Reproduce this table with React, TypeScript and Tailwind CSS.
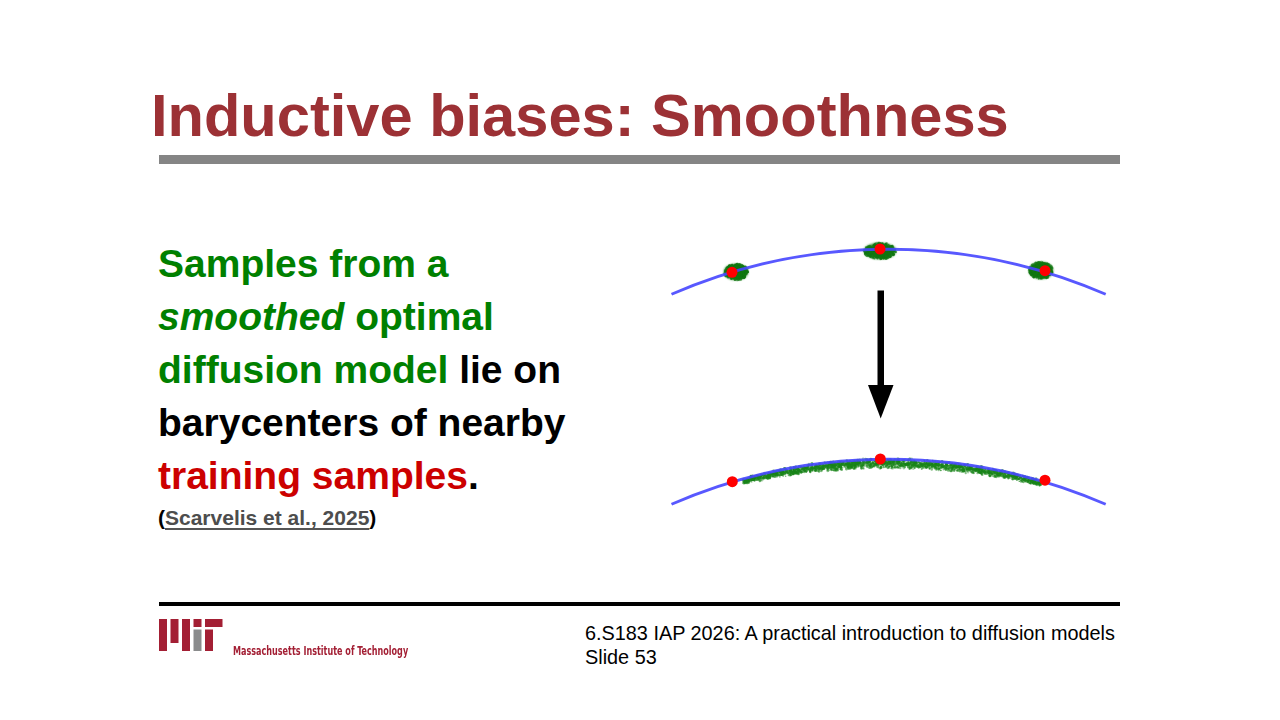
import React from "react";

function mulberry32(a: number) {
  return function () {
    a |= 0;
    a = (a + 0x6d2b79f5) | 0;
    let t = Math.imul(a ^ (a >>> 15), 1 | a);
    t = (t + Math.imul(t ^ (t >>> 7), 61 | t)) ^ t;
    return ((t ^ (t >>> 14)) >>> 0) / 4294967296;
  };
}

const CX = 888.5;
const R = 545.7;
const CY_BOT = 1004.7;

function arcY(cy: number, x: number) {
  return cy - Math.sqrt(R * R - (x - CX) * (x - CX));
}

const band: { x: number; y: number; r: number; o: number }[] = (() => {
  const rnd = mulberry32(12345);
  const pts: { x: number; y: number; r: number; o: number }[] = [];
  for (let i = 0; i < 2600; i++) {
    const x = 743 + rnd() * 298;
    const u = (x - 743) / 298;
    const thick = 7 + 4 * Math.sin(Math.PI * u);
    const base = arcY(CY_BOT, x);
    const g = (rnd() + rnd()) / 2;
    const y = base - 1 + g * thick;
    pts.push({ x, y, r: 0.7 + rnd() * 0.8, o: 0.3 + rnd() * 0.45 });
  }
  return pts;
})();

const blobs: { x: number; y: number; r: number; o: number }[] = (() => {
  const rnd = mulberry32(777);
  const centers = [
    { x: 736, y: 272, rx: 12, ry: 8 },
    { x: 880, y: 251, rx: 16, ry: 8 },
    { x: 1041, y: 270.5, rx: 12, ry: 8.5 },
  ];
  const pts: { x: number; y: number; r: number; o: number }[] = [];
  centers.forEach((c) => {
    for (let i = 0; i < 350; i++) {
      const a = rnd() * Math.PI * 2;
      const rr = Math.sqrt(rnd());
      pts.push({
        x: c.x + Math.cos(a) * rr * c.rx,
        y: c.y + Math.sin(a) * rr * c.ry,
        r: 0.8 + rnd() * 0.8,
        o: 0.4 + rnd() * 0.4,
      });
    }
  });
  return pts;
})();

function Figure() {
  return (
    <svg
      width="440"
      height="270"
      viewBox="668 238 440 270"
      className="mt-[1px] shrink-0"
    >
      <defs>
        <filter id="soft" x="-50%" y="-50%" width="200%" height="200%">
          <feGaussianBlur stdDeviation="1.3" />
        </filter>
      </defs>
      <g filter="url(#soft)">
        <ellipse cx="736" cy="272" rx="12" ry="8" fill="#1a7d1a" />
        <ellipse cx="880" cy="251" rx="16" ry="8" fill="#1a7d1a" />
        <ellipse cx="1041" cy="270.5" rx="12" ry="8.5" fill="#1a7d1a" />
      </g>
      {blobs.map((p, i) => (
        <circle key={"b" + i} cx={p.x} cy={p.y} r={p.r} fill="#117711" opacity={p.o} />
      ))}
      <path
        d={`M 671.5 294.3 A ${R} ${R} 0 0 1 1105.7 294.3`}
        fill="none"
        stroke="#4646ff"
        strokeWidth="2.8"
        opacity="0.9"
      />
      <circle cx="732" cy="272.3" r="5.5" fill="#ff0000" />
      <circle cx="880" cy="249" r="5.5" fill="#ff0000" />
      <circle cx="1045" cy="270.7" r="5.5" fill="#ff0000" />

      <rect x="877.5" y="290.5" width="6.5" height="96" fill="#000" />
      <polygon points="868,385 893.5,385 880.7,418.5" fill="#000" />

      {band.map((p, i) => (
        <circle key={"p" + i} cx={p.x} cy={p.y} r={p.r} fill="#1a851a" opacity={p.o} />
      ))}
      <path
        d={`M 671.5 504.3 A ${R} ${R} 0 0 1 1105.7 504.3`}
        fill="none"
        stroke="#4646ff"
        strokeWidth="2.8"
        opacity="0.9"
      />
      <circle cx="732.3" cy="481.7" r="5.5" fill="#ff0000" />
      <circle cx="880.3" cy="459" r="5.5" fill="#ff0000" />
      <circle cx="1045" cy="480.2" r="5.5" fill="#ff0000" />
    </svg>
  );
}

function MitLogo() {
  return (
    <svg width="64" height="33" viewBox="159 619 64 33" className="shrink-0">
      <rect x="159" y="619" width="8" height="32" fill="#a31f34" />
      <rect x="170.5" y="619" width="8" height="24" fill="#a31f34" />
      <rect x="182" y="619" width="8" height="32" fill="#a31f34" />
      <rect x="193.5" y="619" width="8" height="8" fill="#a31f34" />
      <rect x="193.5" y="629.5" width="8" height="21.5" fill="#8a8b8c" />
      <rect x="205" y="619" width="17.5" height="8" fill="#a31f34" />
      <rect x="205" y="629.5" width="8" height="21.5" fill="#a31f34" />
    </svg>
  );
}

export default function App() {
  return (
    <div className="w-[1280px] h-[720px] bg-white overflow-hidden flex flex-col font-['Liberation_Sans',Arial,Helvetica,sans-serif]">
      <div className="pt-[86px] pl-[151px] h-[146px] text-[59.6px] leading-[60px] font-bold text-[#9c3135] whitespace-nowrap">
        Inductive biases: Smoothness
      </div>
      <div className="mt-[9px] ml-[159px] w-[961px] h-[9px] bg-[#858585]" />

      <div className="mt-[73px] h-[365px] flex pl-[158px]">
        <div className="w-[510px] shrink-0">
          <div className="text-[39px] leading-[53px] font-bold whitespace-nowrap">
            <div className="text-[#008000]">Samples from a</div>
            <div className="text-[#008000]">
              <span className="italic">smoothed</span> optimal
            </div>
            <div>
              <span className="text-[#008000]">diffusion model</span>
              <span className="text-black"> lie on</span>
            </div>
            <div className="text-black">barycenters of nearby</div>
            <div>
              <span className="text-[#cc0000]">training samples</span>
              <span className="text-black">.</span>
            </div>
          </div>
          <div className="mt-[4px] text-[21px] leading-[24px] font-bold text-black whitespace-nowrap">
            (
            <span className="text-[#4d4d4d] underline decoration-[#555555] decoration-2 underline-offset-[3px]">
              Scarvelis et al., 2025
            </span>
            )
          </div>
        </div>
        <Figure />
      </div>

      <div className="ml-[159px] w-[961px] h-[4px] bg-black" />

      <div className="mt-[13px] flex pl-[159px]">
        <div className="w-[426px] shrink-0 flex items-start">
          <MitLogo />
          <span className="ml-[10px] mt-[25px] inline-block origin-left scale-x-[0.78] text-[11.5px] leading-[14px] font-bold text-[#a31f34] whitespace-nowrap font-['Liberation_Sans_Narrow','DejaVu_Sans_Condensed','Arial_Narrow',sans-serif]">
            Massachusetts Institute of Technology
          </span>
        </div>
        <div className="mt-[2px] text-[19.85px] leading-[24px] text-black whitespace-nowrap">
          <div>6.S183 IAP 2026: A practical introduction to diffusion models</div>
          <div>Slide 53</div>
        </div>
      </div>
    </div>
  );
}
